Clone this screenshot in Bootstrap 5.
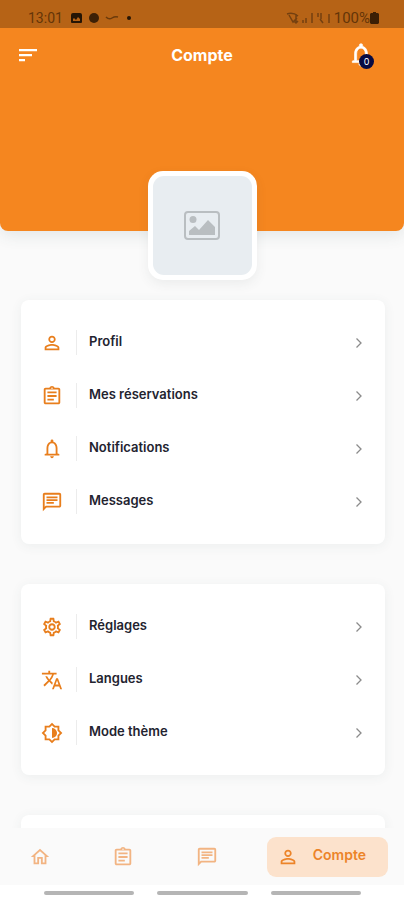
<!DOCTYPE html>
<html lang="fr" class="h-100">
<head>
<meta charset="utf-8">
<meta name="viewport" content="width=device-width, initial-scale=1">
<title>Compte</title>
<link href="https://cdn.jsdelivr.net/npm/bootstrap@5.3.0/dist/css/bootstrap.min.css" rel="stylesheet">
<style>
:root { --brand: #f5861f; --icon: #e87e1c; }
body { font-family: Inter, "Liberation Sans", sans-serif; background: #fafafa; color: #23232f; }
svg { display: block; fill: currentColor; flex: none; }
.screen { min-height: 0; }
.hero { background: var(--brand); height: 231px; border-radius: 0 0 8px 8px; box-shadow: 0 4px 16px rgba(60, 80, 80, .12); }
.status { background: #b66316; height: 28px; color: #643508; font: 14px/20px Roboto, sans-serif; padding: 7px 25px 0 28px; }
.status .level { font-size: 15px; }
.topbar { height: 54px; padding: 0 20px 0 16px; }
.topbar h1 { font-size: 16px; line-height: 20px; }
.plain { background: none; border: 0; padding: 0; color: inherit; }
.alerts { margin-right: 10px; }
.count { left: 11px; top: 12px; width: 15px; height: 15px; border-radius: 50%; background: #080b42; font-size: 9px; line-height: 15px; }
.avatar { width: 109px; height: 109px; margin-top: -60px; padding: 5px; border-radius: 15px; background: #fff; box-shadow: 0 4px 12px rgba(60, 80, 80, .08); z-index: 1; }
.avatar-fill { background: #e8edf1; color: #b9bec1; border-radius: 11px; }
.groups { padding: 20px 19px 0 21px; gap: 40px; }
.panel { background: #fff; border-radius: 8px; padding: 16px 20px; box-shadow: 0 2px 12px rgba(60, 80, 80, .07); }
.panel-next { min-height: 60px; }
.entry { height: 53px; color: #23232f; font-size: 13px; line-height: 20px; font-weight: 600; }
.entry .symbol { color: var(--icon); width: 36px; border-right: 1px solid #ececec; height: 25px; }
.entry .caption { padding: 0 0 4px 12px; }
.entry .arrow { color: #8b8b8b; margin-right: 2px; }
.tabs { display: grid; grid-template-columns: 7fr 7fr 6fr 121px; background: #fafafa; height: 57px; padding: 0 16px 0 29px; }
.tabs a { color: #f2b482; }
.tabs a.current { background: #fce2cc; color: #ec8429; height: 40px; border-radius: 9px; padding: 0 22px 0 10px; font-size: 14px; line-height: 20px; }
.system { background: #fff; height: 15px; padding: 6px 43px 0 44px; gap: 23px; }
.system span { height: 4px; border-radius: 2px; background: #b5b5b5; }
</style>
<script src="https://cdn.jsdelivr.net/npm/bootstrap@5.3.0/dist/js/bootstrap.bundle.min.js"></script>
</head>
<body class="vh-100 d-flex flex-column">
<svg class="d-none" aria-hidden="true">
  <symbol id="person" viewBox="0 0 24 24"><path d="M12 5.900a2.100 2.100 0 1 1 0 4.200 2.100 2.100 0 0 1 0-4.200m0 9c2.970 0 6.100 1.460 6.100 2.100v1.100H5.900V17c0-.64 3.130-2.100 6.100-2.100M12 4C9.790 4 8 5.790 8 8s1.790 4 4 4 4-1.790 4-4-1.790-4-4-4zm0 9c-2.670 0-8 1.340-8 4v3h16v-3c0-2.660-5.330-4-8-4z"/></symbol>
  <symbol id="clipboard" viewBox="0 0 24 24"><path d="M7 15h7v2H7zm0-4h10v2H7zm0-4h10v2H7zm12-4h-4.180C14.400 1.840 13.300 1 12 1s-2.400.84-2.820 2H5c-1.100 0-2 .9-2 2v14c0 1.100.9 2 2 2h14c1.100 0 2-.9 2-2V5c0-1.100-.9-2-2-2zm-7-.25a.75.75 0 1 1 0 1.500.75.75 0 0 1 0-1.500zM19 19H5V5h14v14z"/></symbol>
  <symbol id="bell" viewBox="0 0 24 24"><path d="M12 22c1.100 0 2-.9 2-2h-4c0 1.100.9 2 2 2zm6-5v-6c0-3.380-1.640-6.310-4.500-7V3a1.500 1.500 0 0 0-3 0v1C7.640 4.690 6 7.600 6 11v6l-2 .5V19h16v-1.500L18 17zm-2 .2H8V11c0-3 1.510-5.300 4-5.300s4 2.300 4 5.300v6.200z"/></symbol>
  <symbol id="chat" viewBox="0 0 24 24"><path d="M4 4h16v12H5.170L4 17.170V4m0-2c-1.100 0-2 .9-2 2v18l4-4h14c1.100 0 2-.9 2-2V4c0-1.100-.9-2-2-2H4zm2 10h8v2H6v-2zm0-3h12v2H6V9zm0-3h12v2H6V6z"/></symbol>
  <symbol id="gear" viewBox="0 0 24 24"><path d="M19.430 12.980c.04-.32.07-.64.07-.98s-.03-.66-.07-.98l2.110-1.650a.5.5 0 0 0 .12-.64l-2-3.460a.5.5 0 0 0-.61-.22l-2.490 1a7.300 7.300 0 0 0-1.690-.98l-.38-2.650A.49.49 0 0 0 14 2h-4a.49.49 0 0 0-.49.42l-.38 2.650c-.61.25-1.170.59-1.690.98l-2.490-1a.5.5 0 0 0-.61.22l-2 3.460a.49.49 0 0 0 .12.64l2.110 1.650c-.04.32-.07.65-.07.98s.03.66.07.98l-2.110 1.650a.5.5 0 0 0-.12.64l2 3.460c.12.22.39.3.61.22l2.490-1c.52.4 1.080.73 1.690.98l.38 2.650c.03.24.24.42.49.42h4c.25 0 .46-.18.49-.42l.38-2.650c.61-.25 1.170-.59 1.690-.98l2.490 1c.23.09.49 0 .61-.22l2-3.460a.5.5 0 0 0-.12-.64l-2.110-1.650zm-1.980-1.710c.07.54.07.92 0 1.460l-.14 1.130.89.7 1.080.84-.7 1.210-1.270-.51-1.040-.42-.9.68c-.43.32-.84.56-1.250.73l-1.060.43-.16 1.130-.2 1.350h-1.400l-.35-2.480-1.060-.43c-.43-.18-.83-.41-1.230-.71l-.91-.7-1.060.43-1.270.51-.7-1.210 1.970-1.540-.14-1.130a6 6 0 0 1 0-1.470l.14-1.130L4.720 8.600l.7-1.210 1.270.51 1.040.42.9-.68c.43-.32.84-.56 1.250-.73l1.060-.43.35-2.480h1.390l.35 2.480 1.060.43c.43.18.83.41 1.230.71l.91.7 1.060-.43 1.270-.51.7 1.210-1.970 1.550.16 1.130zM12 8c-2.210 0-4 1.790-4 4s1.790 4 4 4 4-1.790 4-4-1.790-4-4-4zm0 6a2 2 0 1 1 0-4 2 2 0 0 1 0 4z"/></symbol>
  <symbol id="translate" viewBox="0 0 24 24"><path d="m12.870 15.070-2.540-2.510.03-.03A17.500 17.500 0 0 0 14.070 6H17V4h-7V2H8v2H1v2h11.170C11.500 7.920 10.440 9.750 9 11.350 8.070 10.320 7.300 9.190 6.690 8h-2c.73 1.630 1.730 3.170 2.980 4.560l-5.090 5.020L4 19l5-5 3.110 3.110.76-2.040zM18.500 10h-2L12 22h2l1.120-3h4.750L21 22h2l-4.500-12zm-2.620 7 1.620-4.330L19.120 17h-3.240z"/></symbol>
  <symbol id="theme" viewBox="0 0 24 24"><path d="M20 15.310 23.310 12 20 8.690V4h-4.690L12 .69 8.690 4H4v4.690L.69 12 4 15.310V20h4.690L12 23.310 15.310 20H20v-4.690zm-2-.83V18h-3.520L12 20.480 9.520 18H6v-3.520L3.520 12 6 9.520V6h3.520L12 3.520 14.480 6H18v3.520L20.480 12 18 14.480zM12 6.500v11a5.500 5.500 0 0 0 0-11z"/></symbol>
  <symbol id="home" viewBox="0 0 24 24"><path d="m12 5.690 5 4.500V18h-2v-6H9v6H7v-7.810l5-4.500M12 3 2 12h3v8h6v-6h2v6h6v-8h3L12 3z"/></symbol>
  <symbol id="chevron" viewBox="0 0 8 12"><path d="m1.500 1.500 4.500 4.500-4.500 4.500" fill="none" stroke="currentColor" stroke-width="1.300"/></symbol>
</svg>

<div class="screen flex-grow-1 overflow-hidden">
  <header class="hero">
    <div class="status d-flex justify-content-between">
      <div class="d-flex align-items-center">
        <span>13:01</span>
        <svg class="ms-2" width="66" height="14" viewBox="0 0 66 14" aria-hidden="true"><path fill="#251505" fill-rule="evenodd" d="M2 2h7a2 2 0 0 1 2 2v7a1 1 0 0 1-1 1H1a1 1 0 0 1-1-1V4a2 2 0 0 1 2-2zm0 6v2h7V8L7 6 5 9 3 7z"/><circle cx="23" cy="7" r="5" fill="#3d2006"/><path d="M35 6q3 3 6 1t6-1" fill="none" stroke="#6b3a0b" stroke-width="1.500"/><circle cx="58" cy="7" r="2" fill="#251505"/></svg>
      </div>
      <div class="d-flex align-items-center">
        <svg class="me-1" width="44" height="14" viewBox="0 0 44 14" aria-hidden="true"><path d="M1 3q6-2 11 2M3 4l4 7 4-4M10 3v9M8 10l2 2 2-2M17 12V9M20 12V7M26 12V2M32 2v4M35 2v6M34 8l3 4M43 12V3" fill="none" stroke="#744010" stroke-width="1.500"/></svg>
        <span class="level">100%</span>
        <svg width="9" height="12" viewBox="0 0 9 12" aria-hidden="true"><path fill="#3b1f05" d="M3 0h3v1h2l1 1v9l-1 1H1l-1-1V2l1-1h2z"/></svg>
      </div>
    </div>
    <div class="topbar d-flex align-items-center text-white">
      <button class="plain me-3" type="button" aria-label="Menu"><svg width="24" height="24" viewBox="0 0 24 24"><path d="M3 6h18v2.200H3zm0 5h13v2.200H3zm0 5h6v2.200H3z"/></svg></button>
      <h1 class="m-0 fw-bold flex-grow-1 text-center">Compte</h1>
      <button class="plain alerts position-relative" type="button" aria-label="Notifications, 0"><svg class="mx-n1" width="26" height="26" stroke="currentColor" stroke-width=".6"><use href="#bell"/></svg><span class="count position-absolute text-center">0</span></button>
    </div>
  </header>

  <main>
    <div class="avatar position-relative mx-auto">
      <div class="avatar-fill w-100 h-100 d-flex align-items-center justify-content-center">
        <svg width="36" height="29" viewBox="0 0 36 29" role="img" aria-label="Photo de profil"><rect x="1" y="1" width="34" height="27" rx="3" fill="none" stroke="currentColor" stroke-width="2"/><circle cx="9" cy="8.500" r="3.500"/><path d="M5 24v-4l6-5 4 4 9-10 7 7v8z"/></svg>
      </div>
    </div>
    <div class="groups d-flex flex-column">
      <nav class="panel" aria-label="Mon compte">
        <a class="entry d-flex align-items-center text-decoration-none" href="#profil"><span class="symbol d-flex align-items-center"><svg width="22" height="22"><use href="#person"/></svg></span><span class="caption flex-grow-1">Profil</span><svg class="arrow" width="8" height="12"><use href="#chevron"/></svg></a>
        <a class="entry d-flex align-items-center text-decoration-none" href="#reservations"><span class="symbol d-flex align-items-center"><svg width="22" height="22"><use href="#clipboard"/></svg></span><span class="caption flex-grow-1">Mes réservations</span><svg class="arrow" width="8" height="12"><use href="#chevron"/></svg></a>
        <a class="entry d-flex align-items-center text-decoration-none" href="#notifications"><span class="symbol d-flex align-items-center"><svg width="22" height="22"><use href="#bell"/></svg></span><span class="caption flex-grow-1">Notifications</span><svg class="arrow" width="8" height="12"><use href="#chevron"/></svg></a>
        <a class="entry d-flex align-items-center text-decoration-none" href="#messages"><span class="symbol d-flex align-items-center"><svg width="22" height="22"><use href="#chat"/></svg></span><span class="caption flex-grow-1">Messages</span><svg class="arrow" width="8" height="12"><use href="#chevron"/></svg></a>
      </nav>
      <nav class="panel" aria-label="Préférences">
        <a class="entry d-flex align-items-center text-decoration-none" href="#reglages"><span class="symbol d-flex align-items-center"><svg width="22" height="22"><use href="#gear"/></svg></span><span class="caption flex-grow-1">Réglages</span><svg class="arrow" width="8" height="12"><use href="#chevron"/></svg></a>
        <a class="entry d-flex align-items-center text-decoration-none" href="#langues"><span class="symbol d-flex align-items-center"><svg width="22" height="22"><use href="#translate"/></svg></span><span class="caption flex-grow-1">Langues</span><svg class="arrow" width="8" height="12"><use href="#chevron"/></svg></a>
        <a class="entry d-flex align-items-center text-decoration-none" href="#mode"><span class="symbol d-flex align-items-center"><svg width="22" height="22"><use href="#theme"/></svg></span><span class="caption flex-grow-1">Mode thème</span><svg class="arrow" width="8" height="12"><use href="#chevron"/></svg></a>
      </nav>
      <div class="panel panel-next"></div>
    </div>
  </main>
</div>

<nav class="tabs align-items-center flex-shrink-0" aria-label="Navigation principale">
  <a href="#accueil" aria-label="Accueil"><svg width="22" height="22"><use href="#home"/></svg></a>
  <a href="#reservations" aria-label="Réservations"><svg width="22" height="22"><use href="#clipboard"/></svg></a>
  <a href="#messages" aria-label="Messages"><svg width="22" height="22"><use href="#chat"/></svg></a>
  <a class="current d-flex align-items-center justify-content-between fw-semibold text-decoration-none" href="#compte" aria-current="page"><svg width="22" height="22"><use href="#person"/></svg><span class="pb-1">Compte</span></a>
</nav>
<div class="system d-flex flex-shrink-0"><span class="flex-fill"></span><span class="flex-fill"></span><span class="flex-fill"></span></div>
</body>
</html>
